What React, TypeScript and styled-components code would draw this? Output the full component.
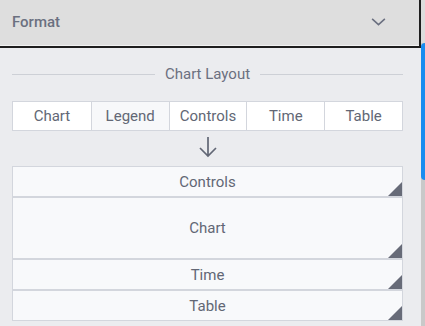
import React from "react";
import styled, { createGlobalStyle } from "styled-components";

const Global = createGlobalStyle`
  html, body { margin: 0; padding: 0; }
  body { font-family: Roboto, "Noto Sans", sans-serif; background: #ebecef; }
`;

const Frame = styled.div`
  width: 425px;
  height: 326px;
  display: flex;
  overflow: hidden;
  background: #ebecef;
`;

const Main = styled.div`
  width: 421px;
  display: flex;
  flex-direction: column;
`;

const Header = styled.div`
  height: 48px;
  box-sizing: border-box;
  display: flex;
  align-items: center;
  justify-content: space-between;
  padding: 0 32px 0 12px;
  background: #dedede;
  border-bottom: 2px solid #1e1e1e;
  border-right: 2px solid #1e1e1e;
  box-shadow: inset 0 -1px 0 #f2f2f2;
`;

const HeaderTitle = styled.span`
  font-size: 15px;
  font-weight: 500;
  color: #6b7080;
  margin-top: -2px;
`;

const Chevron = styled.svg`
  width: 17px;
  height: 17px;
  margin-top: -3px;
`;

const Body = styled.div`
  padding: 17px 18px 0 12px;
  display: flex;
  flex-direction: column;
`;

const Divider = styled.div`
  display: flex;
  align-items: center;
  gap: 10px;
  height: 18px;
  font-size: 15px;
  color: #6b7080;
  &::before, &::after {
    content: "";
    flex: 1;
    height: 1px;
    background: #cdd0d6;
  }
`;

const Tabs = styled.div`
  margin-top: 18px;
  display: grid;
  grid-template-columns: repeat(5, 1fr);
  border: 1px solid #d3d6dd;
  background: #ffffff;
  height: 30px;
  box-sizing: border-box;
`;

const Tab = styled.div<{ $alt?: boolean }>`
  display: flex;
  align-items: center;
  justify-content: center;
  font-size: 15px;
  color: #626775;
  background: ${(p) => (p.$alt ? "#f7f8fa" : "#ffffff")};
  border-left: 1px solid #d3d6dd;
  &:first-child { border-left: none; }
`;

const ArrowRow = styled.div`
  height: 35px;
  display: flex;
  justify-content: center;
  align-items: flex-start;
  padding-top: 5px;
  box-sizing: border-box;
`;

const Stack = styled.div`
  display: flex;
  flex-direction: column;
`;

const Block = styled.div<{ $h: number }>`
  position: relative;
  height: ${(p) => p.$h}px;
  box-sizing: border-box;
  border: 1px solid #d3d6dd;
  background: #f8f9fb;
  display: flex;
  align-items: center;
  justify-content: center;
  font-size: 15px;
  color: #626775;
  &::after {
    content: "";
    position: absolute;
    right: 0;
    bottom: 0;
    width: 0;
    height: 0;
    border-style: solid;
    border-width: 0 0 14px 14px;
    border-color: transparent transparent #676b78 transparent;
  }
`;

const Scrollbar = styled.div`
  width: 4px;
  background: #c9c9c9;
  display: flex;
  flex-direction: column;
`;

const TrackTop = styled.div`
  height: 43px;
  background: #dcdcdc;
`;

const Thumb = styled.div`
  height: 137px;
  background: #1a8cf0;
  border-radius: 4px 0 0 4px;
`;

export default function App() {
  return (
    <>
      <Global />
      <Frame>
        <Main>
          <Header>
            <HeaderTitle>Format</HeaderTitle>
            <Chevron viewBox="0 0 16 16" fill="none" stroke="#6b7080" strokeWidth="1.5">
              <path d="M2 5.5 L8 11 L14 5.5" />
            </Chevron>
          </Header>
          <Body>
            <Divider>Chart Layout</Divider>
            <Tabs>
              <Tab>Chart</Tab>
              <Tab $alt>Legend</Tab>
              <Tab>Controls</Tab>
              <Tab>Time</Tab>
              <Tab>Table</Tab>
            </Tabs>
            <ArrowRow>
              <svg width="22" height="22" viewBox="0 0 22 22" fill="none" stroke="#626775" strokeWidth="1.7">
                <path d="M11 1 V20 M3 12 L11 20 L19 12" />
              </svg>
            </ArrowRow>
            <Stack>
              <Block $h={31}>Controls</Block>
              <Block $h={62}>Chart</Block>
              <Block $h={31}>Time</Block>
              <Block $h={31}>Table</Block>
            </Stack>
          </Body>
        </Main>
        <Scrollbar>
          <TrackTop />
          <Thumb />
        </Scrollbar>
      </Frame>
    </>
  );
}
